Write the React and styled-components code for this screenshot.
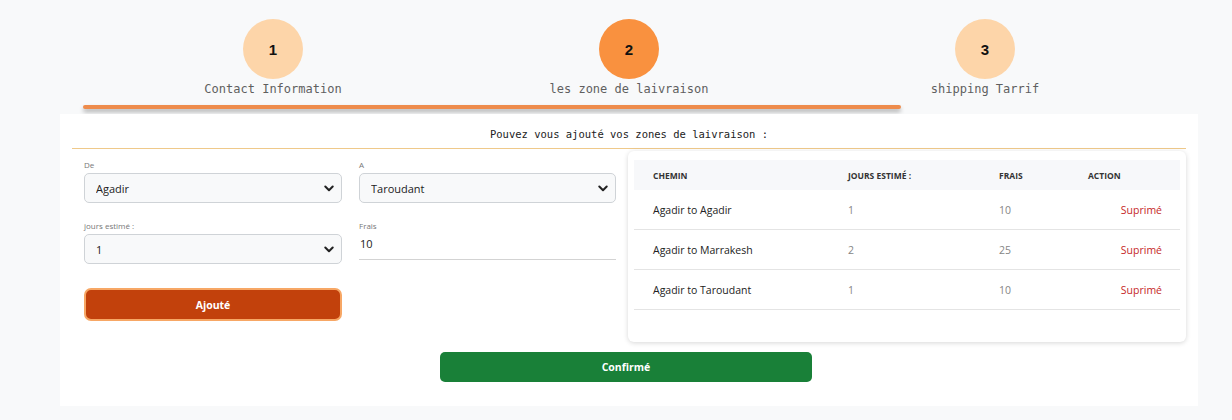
import React, {useState} from 'react'
import styled, {createGlobalStyle, css} from 'styled-components'

const GlobalStyle = createGlobalStyle`
  body {
    margin: 0;
    background: #f8f9fa;
    font-family: "Open Sans", "Noto Sans", sans-serif;
  }
`

const Page = styled.div`
  padding: 19px 0 0 60px;
`

const Steps = styled.div`
  display: grid;
  grid-template-columns: repeat(3, 1fr);
  width: 1068px;
  margin-left: 35px;
`

const Step = styled.div`
  display: flex;
  flex-direction: column;
  align-items: center;
`

const Circle = styled.div`
  width: 60px;
  height: 60px;
  border-radius: 50%;
  display: flex;
  align-items: center;
  justify-content: center;
  background: ${(props) => props.active ? "#f9913f" : "#fdd5a9"};
  font-family: "Liberation Sans", Arial, sans-serif;
  font-weight: bold;
  font-size: 15px;
  color: #111;
`

const StepLabel = styled.div`
  margin-top: 2px;
  font-family: "DejaVu Sans Mono", monospace;
  font-size: 12px;
  line-height: 16px;
  color: #5f5f5f;
`

const Progress = styled.div`
  margin: 8px 0 5px 23px;
  width: 818px;
  height: 4px;
  border-radius: 2px;
  background: #ee8c4c;
  box-shadow: 0 3px 4px rgba(0, 0, 0, 0.3);
`

const Card = styled.div`
  width: 1138px;
  background: #fff;
  padding: 0 12px 24px;
  box-sizing: border-box;
`

const Title = styled.div`
  padding: 12px 0 6px;
  text-align: center;
  font-family: "DejaVu Sans Mono", monospace;
  font-size: 10.5px;
  line-height: 16px;
  color: #222;
  border-bottom: 1px solid #efc98a;
`

const Body = styled.div`
  display: grid;
  grid-template-columns: 556px 558px;
  margin-top: 2px;
`

const Form = styled.div`
  padding: 9px 12px 0;
  display: grid;
  grid-template-columns: 258px 257px;
  column-gap: 17px;
  row-gap: 18px;
  align-content: start;
`

const Field = styled.div`
  display: flex;
  flex-direction: column;
`

const Label = styled.label`
  font-size: 8px;
  line-height: 10px;
  color: #777;
  margin-bottom: 3px;
`

const SelectBox = styled.div`
  position: relative;
  height: 30px;
`

const Select = styled.select`
  appearance: none;
  width: 100%;
  height: 100%;
  box-sizing: border-box;
  padding: 0 30px 0 11px;
  border: 1px solid #cfd3d7;
  border-radius: 5px;
  background: #f8f9fa;
  font-family: inherit;
  font-size: 11px;
  color: #222;
`

const Chevron = styled.svg`
  position: absolute;
  right: 8px;
  top: 12px;
  width: 10px;
  height: 7px;
  pointer-events: none;
`

const TextInput = styled.input`
  height: 26px;
  box-sizing: border-box;
  border: none;
  border-bottom: 1px solid #d3d3d3;
  padding: 0 0 6px 1px;
  font-family: inherit;
  font-size: 11px;
  color: #222;
  outline: none;
`

const AddButton = styled.button`
  grid-column: 1;
  margin-top: 6px;
  height: 33px;
  border: 2px solid #f7a765;
  border-radius: 7px;
  background: #c2410c;
  color: #fff;
  font-family: inherit;
  font-weight: bold;
  font-size: 10.5px;
`

const TableCard = styled.div`
  height: 191px;
  padding: 9px 6px 0;
  box-sizing: border-box;
  border-radius: 6px;
  background: #fff;
  box-shadow: 0 1px 5px rgba(0, 0, 0, 0.16);
`

const Table = styled.table`
  width: 100%;
  border-collapse: collapse;
  table-layout: fixed;
`

const Th = styled.th`
  height: 30px;
  padding: 0 0 0 19px;
  background: #f7f8fa;
  text-align: left;
  font-size: 8.5px;
  font-weight: bold;
  text-transform: uppercase;
  color: #333;
`

const Td = styled.td`
  height: 39px;
  padding: 0 0 0 19px;
  border-bottom: 1px solid #e4e4e4;
  font-size: 10.5px;
  color: ${(props) => props.muted ? "#858585" : "#222"};
  ${(props) =>
    props.action &&
    css`
      text-align: right;
      padding-right: 18px;
      color: #c62828;
  `}
`

const ConfirmButton = styled.button`
  display: block;
  width: 372px;
  height: 30px;
  margin: 10px 0 0 368px;
  border: none;
  border-radius: 5px;
  background: #198038;
  color: #fff;
  font-family: inherit;
  font-weight: bold;
  font-size: 10.5px;
`

const ChevronIcon = () => (
  <Chevron viewBox="0 0 10 7">
    <path d="M1.3 1.5l3.7 3.7 3.7-3.7" fill="none" stroke="#222" strokeWidth="2" strokeLinecap="round" strokeLinejoin="round" />
  </Chevron>
)

const steps = ["Contact Information", "les zone de laivraison", "shipping Tarrif"]

const zones = [
  {from: "Agadir", to: "Agadir", days: 1, price: 10},
  {from: "Agadir", to: "Marrakesh", days: 2, price: 25},
  {from: "Agadir", to: "Taroudant", days: 1, price: 10},
]

const App = () => {
  const [from, setFrom] = useState("Agadir")
  const [to, setTo] = useState("Taroudant")
  const [days, setDays] = useState("1")
  const [price, setPrice] = useState("10")

  return (
    <Page>
      <GlobalStyle />
      <Steps>
        {steps.map((label, i) => (
          <Step key={label}>
            <Circle active={i === 1}>{i + 1}</Circle>
            <StepLabel>{label}</StepLabel>
          </Step>
        ))}
      </Steps>
      <Progress />
      <Card>
        <Title>Pouvez vous ajouté vos zones de laivraison :</Title>
        <Body>
          <Form>
            <Field>
              <Label>De</Label>
              <SelectBox>
                <Select value={from} onChange={(e) => setFrom(e.target.value)}>
                  <option>Agadir</option>
                  <option>Marrakesh</option>
                  <option>Taroudant</option>
                </Select>
                <ChevronIcon />
              </SelectBox>
            </Field>
            <Field>
              <Label>A</Label>
              <SelectBox>
                <Select value={to} onChange={(e) => setTo(e.target.value)}>
                  <option>Agadir</option>
                  <option>Marrakesh</option>
                  <option>Taroudant</option>
                </Select>
                <ChevronIcon />
              </SelectBox>
            </Field>
            <Field>
              <Label>jours estimé :</Label>
              <SelectBox>
                <Select value={days} onChange={(e) => setDays(e.target.value)}>
                  <option>1</option>
                  <option>2</option>
                  <option>3</option>
                </Select>
                <ChevronIcon />
              </SelectBox>
            </Field>
            <Field>
              <Label>Frais</Label>
              <TextInput value={price} onChange={(e) => setPrice(e.target.value)} />
            </Field>
            <AddButton>Ajouté</AddButton>
          </Form>
          <TableCard>
            <Table>
              <colgroup>
                <col style={{width: "195px"}} />
                <col style={{width: "151px"}} />
                <col style={{width: "89px"}} />
                <col />
              </colgroup>
              <thead>
                <tr>
                  <Th>Chemin</Th>
                  <Th>Jours estimé :</Th>
                  <Th>Frais</Th>
                  <Th>Action</Th>
                </tr>
              </thead>
              <tbody>
                {zones.map((z) => (
                  <tr key={z.to}>
                    <Td>{z.from} to {z.to}</Td>
                    <Td muted>{z.days}</Td>
                    <Td muted>{z.price}</Td>
                    <Td action>Suprimé</Td>
                  </tr>
                ))}
              </tbody>
            </Table>
          </TableCard>
        </Body>
        <ConfirmButton>Confirmé</ConfirmButton>
      </Card>
    </Page>
  )
}

export default App
